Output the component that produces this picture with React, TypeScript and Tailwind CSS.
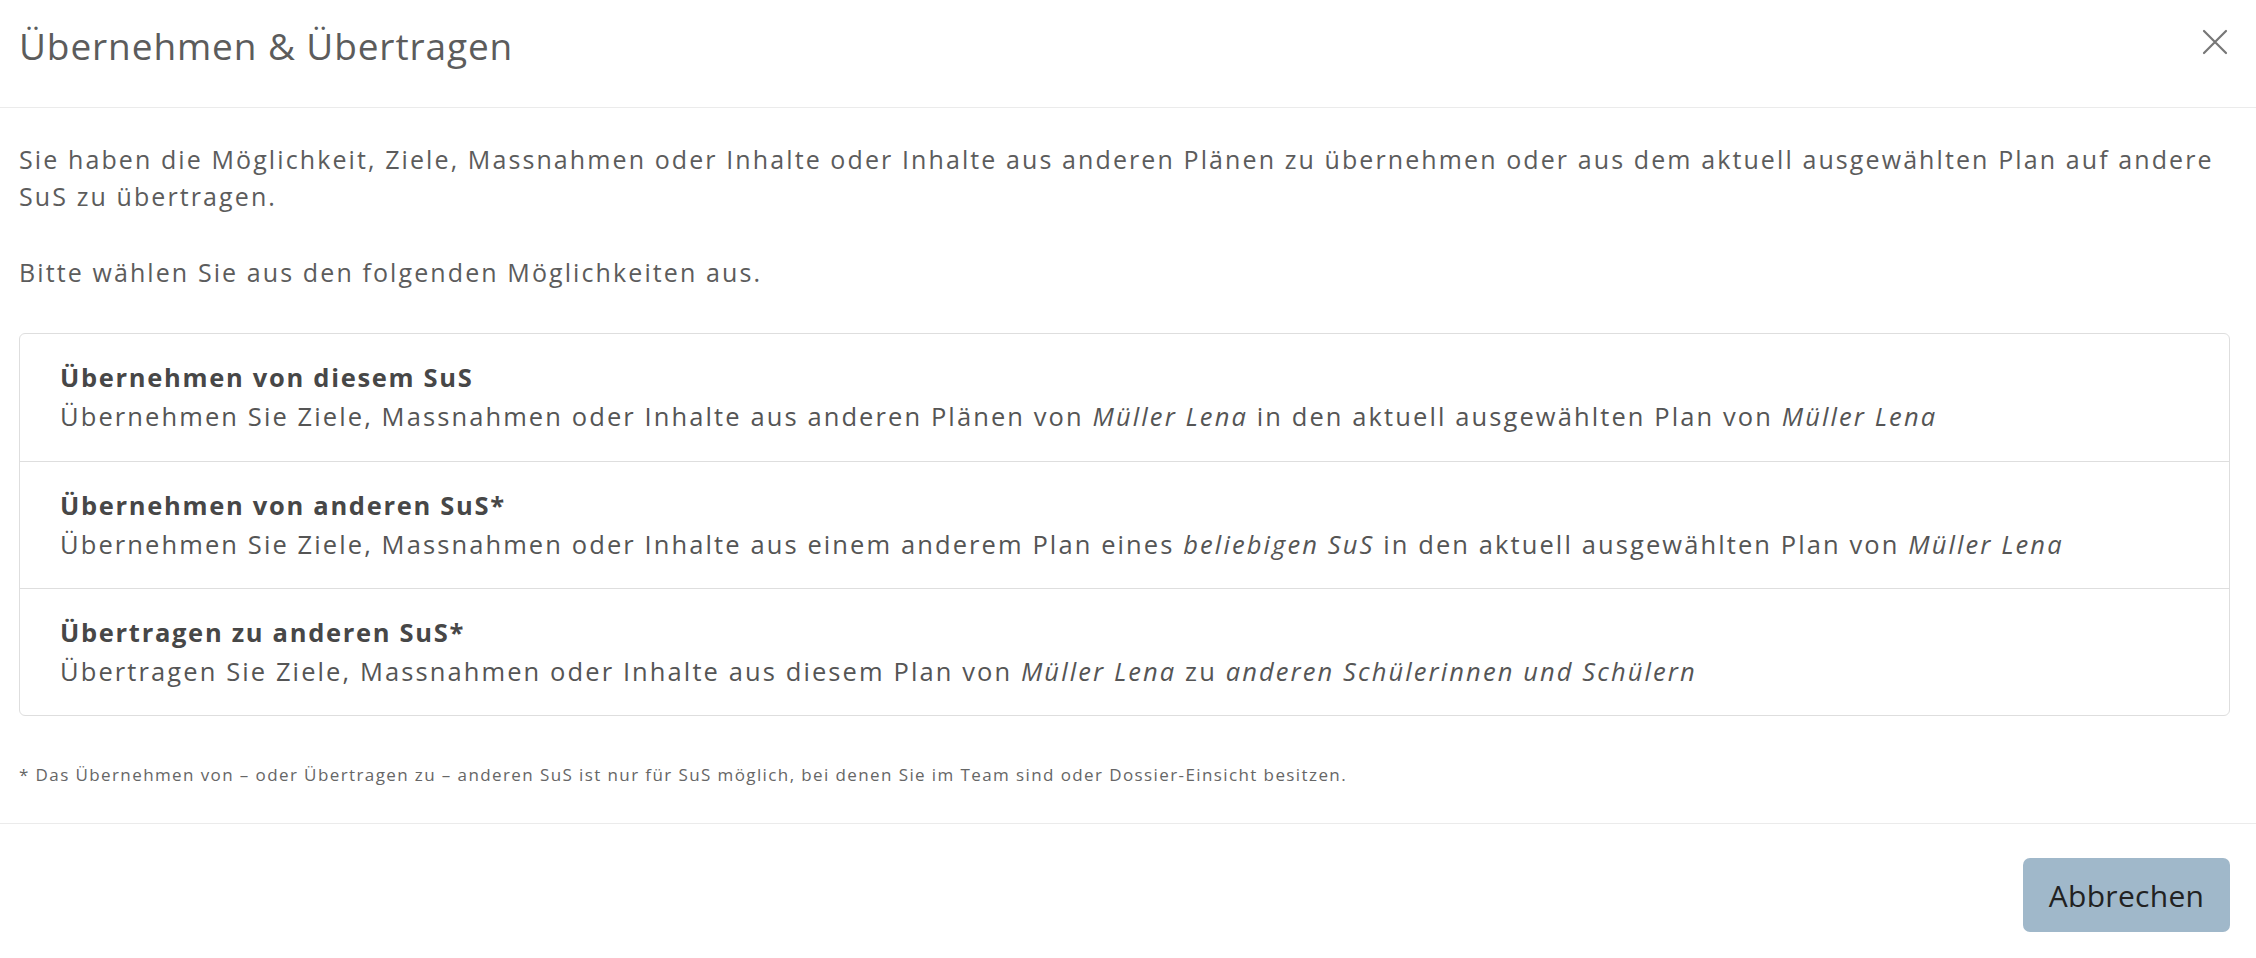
import React from "react";

const font = { fontFamily: '"Open Sans", "Noto Sans", sans-serif' };

const options = [
  {
    title: "Übernehmen von diesem SuS",
    body: (
      <>
        Übernehmen Sie Ziele, Massnahmen oder Inhalte aus anderen Plänen von <em>Müller Lena</em> in den aktuell
        ausgewählten Plan von <em>Müller Lena</em>
      </>
    ),
  },
  {
    title: "Übernehmen von anderen SuS*",
    body: (
      <>
        Übernehmen Sie Ziele, Massnahmen oder Inhalte aus einem anderem Plan eines <em>beliebigen SuS</em> in den
        aktuell ausgewählten Plan von <em>Müller Lena</em>
      </>
    ),
  },
  {
    title: "Übertragen zu anderen SuS*",
    body: (
      <>
        Übertragen Sie Ziele, Massnahmen oder Inhalte aus diesem Plan von <em>Müller Lena</em> zu{" "}
        <em>anderen Schülerinnen und Schülern</em>
      </>
    ),
  },
];

export default function App() {
  return (
    <div className="w-[2256px] h-[958px] bg-white text-[#5c5c5c] overflow-hidden" style={font}>
      {/* header */}
      <div className="h-[108px] border-b border-[#ebebeb] pl-[19px] pr-[26px] pt-[20px] flex items-start justify-between">
        <h5 className="text-[37px] leading-[52px] tracking-[0.9px] text-[#5c5c5c] font-normal">
          Übernehmen &amp; Übertragen
        </h5>
        <button className="mt-[7px] w-[30px] h-[30px] flex items-center justify-center text-[#777]">
          <svg width="26" height="26" viewBox="0 0 26 26" fill="none" stroke="currentColor" strokeWidth="2.2" strokeLinecap="round">
            <path d="M2 2 L24 24 M24 2 L2 24" />
          </svg>
        </button>
      </div>

      {/* body */}
      <div className="pl-[19px] pr-[26px] pt-[33px]">
        <p className="text-[25px] leading-[37.4px] tracking-[2.1px]">
          Sie haben die Möglichkeit, Ziele, Massnahmen oder Inhalte oder Inhalte aus anderen Plänen zu übernehmen oder
          aus dem aktuell ausgewählten Plan auf andere SuS zu übertragen.
        </p>
        <p className="mt-[38px] text-[25px] leading-[37.4px] tracking-[2.1px]">
          Bitte wählen Sie aus den folgenden Möglichkeiten aus.
        </p>

        <div className="mt-[42px] border border-[#dedede] rounded-[6px]">
          {options.map((o, i) => (
            <div
              key={i}
              className={`h-[127px] px-[40px] pt-[24px] ${i > 0 ? "border-t border-[#dedede]" : ""}`}
            >
              <div className="text-[25.5px] leading-[39px] tracking-[1.7px] font-bold text-[#474747]">{o.title}</div>
              <div className="text-[25.5px] leading-[39px] tracking-[2.1px] text-[#555]">{o.body}</div>
            </div>
          ))}
        </div>

        <p className="mt-[46px] text-[17px] leading-[25px] tracking-[1.4px] text-[#666]">
          * Das Übernehmen von – oder Übertragen zu – anderen SuS ist nur für SuS möglich, bei denen Sie im Team sind
          oder Dossier-Einsicht besitzen.
        </p>
      </div>

      {/* footer */}
      <div className="mt-[36px] border-t border-[#ebebeb] pl-[19px] pr-[26px] pt-[34px] flex justify-end">
        <button className="w-[207px] h-[74px] rounded-[7px] bg-[#a0b8ca] text-[#222] text-[30px] tracking-[0.3px]">
          Abbrechen
        </button>
      </div>
    </div>
  );
}
